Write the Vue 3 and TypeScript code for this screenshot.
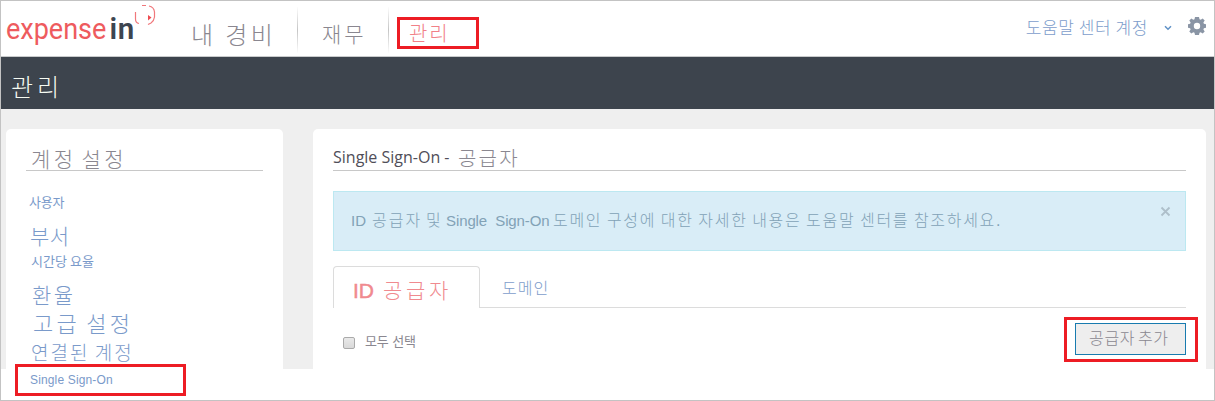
<script setup lang="ts">
interface SideLink {
  label: string
  kind: string
}

const sideLinks: SideLink[] = [
  { label: '사용자', kind: 'users' },
  { label: '부서', kind: 'departments' },
  { label: '시간당 요율', kind: 'rates' },
  { label: '환율', kind: 'exchange' },
  { label: '고급 설정', kind: 'advanced' },
  { label: '연결된 계정', kind: 'connected' },
  { label: 'Single Sign-On', kind: 'sso' },
]
</script>

<template>
  <div class="page">
    <header class="topbar">
      <svg class="logo" width="152" height="46" viewBox="0 0 152 46" aria-label="expensein">
        <text x="0" y="38" class="logo-a" transform="scale(.915 1)">expense</text>
        <text x="103.500" y="38" class="logo-b">in</text>
        <g fill="none" stroke="#f0777b" stroke-width="1.2">
          <path d="M129.500 11V18Q129.500 22 133 22.500" />
          <path d="M136 4.500H140M143 5Q148 6 148.500 11V16Q148 20 145 22L142 23.500" />
        </g>
        <path d="M142 14L145.500 16.500L142 19.500Z" fill="#ee4b50" />
      </svg>
      <nav class="nav">
        <a class="nav-mine"><span>내 경비</span></a>
        <a class="nav-finance"><span>재무</span></a>
        <a class="nav-admin"><span>관리</span></a>
      </nav>
      <div class="account">
        <span class="account-name">도움말 센터 계정</span>
        <svg class="chevron" width="8" height="6" viewBox="0 0 8 6"><path d="M1 1.200L4 4.200L7 1.200" fill="none" stroke="#5f91c6" stroke-width="1.500" /></svg>
        <svg class="gear" width="20" height="20" viewBox="0 0 20 20">
          <path fill="#8a95a5" fill-rule="evenodd" d="M8 1H12L12.500 3.300L13.700 3.800L15.700 2.500L17.700 4.500L16.400 6.500L16.900 7.700L19 8.200V11.800L16.900 12.300L16.400 13.500L17.700 15.500L15.700 17.500L13.700 16.200L12.500 16.700L12 19H8L7.500 16.700L6.300 16.200L4.300 17.500L2.300 15.500L3.600 13.500L3.100 12.300L1 11.800V8.200L3.100 7.700L3.600 6.500L2.300 4.500L4.300 2.500L6.300 3.800L7.500 3.300ZM10 6.800A3.200 3.200 0 1 0 10 13.200A3.200 3.200 0 1 0 10 6.800Z" />
        </svg>
      </div>
    </header>

    <div class="titlebar"><h1>관리</h1></div>

    <div class="content">
      <aside class="sidebar">
        <h2><span>계정 설정</span></h2>
        <ul>
          <li v-for="link in sideLinks" :key="link.kind" :class="link.kind">
            <a>{{ link.label }}</a>
          </li>
        </ul>
      </aside>

      <main class="panel">
        <h2 class="panel-title"><span class="latin">Single Sign-On -</span><span class="hangul">공급자</span></h2>
        <div class="alert">
          <p><span class="a1">ID</span><span class="a2">공급자 및</span><span class="a3">Single&nbsp; Sign-On</span><span class="a4">도메인 구성에 대한 자세한 내용은 도움말 센터를 참조하세요.</span></p>
          <svg class="close" width="11" height="11" viewBox="0 0 11 11"><path d="M1.500 1.500L9.500 9.500M9.500 1.500L1.500 9.500" stroke="#aebfca" stroke-width="1.800" /></svg>
        </div>
        <div class="tabs">
          <div class="tab active"><b>ID</b><span>공급자</span></div>
          <div class="tab second"><span>도메인</span></div>
        </div>
        <div class="toolbar">
          <label><i class="box"></i><span>모두 선택</span></label>
          <div class="callout"><button type="button"><span>공급자 추가</span></button></div>
        </div>
      </main>
    </div>
  </div>
</template>

<style>
body {
  margin: 0;
  overflow: hidden;
}
</style>

<style scoped>
* {
  box-sizing: border-box;
}
.page {
  width: 1215px;
  height: 401px;
  border: 1px solid #c3c3c3;
  background: #fff;
  overflow: hidden;
  font-family: "Liberation Sans", "Noto Sans CJK KR", sans-serif;
  font-weight: 300;
  color: #8a8790;
}
span, a, h1, h2, p {
  white-space: pre;
}
.topbar {
  height: 56px;
  display: flex;
  border-bottom: 1px solid #c9cbcc;
}
.logo {
  flex: none;
  margin-left: 5px;
}
.logo text {
  font-family: Roboto, sans-serif;
  font-size: 29.500px;
}
.logo .logo-a {
  font-weight: 400;
  fill: #ee5b5e;
}
.logo .logo-b {
  font-weight: 600;
  letter-spacing: .5px;
  fill: #3d4550;
}
.nav {
  display: flex;
  line-height: 30px;
}
.nav a {
  display: block;
}
.nav-mine {
  width: 139px;
  padding: 20px 0 0 33px;
  font-size: 24px;
  letter-spacing: 3.300px;
  word-spacing: -1px;
}
.nav-finance {
  width: 92px;
  height: 46px;
  margin-top: 6px;
  padding: 13px 0 0 24px;
  font-size: 21px;
  letter-spacing: 3px;
  border-left: 1px solid #ccc;
  border-right: 1px solid #ccc;
  border-image: linear-gradient(#fff, #c5c5c5 50%, #fff) 1;
}
.nav-admin {
  width: 82px;
  height: 32px;
  margin: 16px 0 0 8px;
  border: 3px solid #ed1c24;
  padding-left: 9px;
  line-height: 29px;
  font-size: 20px;
  letter-spacing: 1.800px;
  color: #f18188;
}
.account {
  display: flex;
  margin-left: auto;
  color: #7d9dcb;
}
.account-name {
  margin-top: 13px;
  line-height: 30px;
  font-size: 17px;
  letter-spacing: .6px;
  word-spacing: -1px;
}
.chevron {
  margin: 24px 0 0 14px;
}
.account-name + .chevron {
  margin-left: 16px;
}
.gear {
  margin: 15px 7px 0 15px;
}
.titlebar {
  height: 52px;
  background: #3d444d;
}
.titlebar h1 {
  margin: 0;
  padding: 15px 0 0 10px;
  line-height: 32px;
  font-size: 24px;
  font-weight: 300;
  letter-spacing: 4px;
  color: #f6fbf2;
}
.content {
  height: 260px;
  display: flex;
  gap: 30px;
  padding: 20px 8px 0 5px;
  background: #efefef;
}
.sidebar {
  width: 277px;
  height: 271px;
  padding: 0 20px;
  background: #fff;
  border-radius: 5px 5px 0 0;
}
.sidebar h2 {
  height: 42px;
  margin: 0;
  padding: 16px 0 0 5px;
  border-bottom: 1px solid #c8c8c8;
  line-height: 30px;
  font-size: 21px;
  font-weight: 300;
  letter-spacing: 3.500px;
  word-spacing: -4.500px;
}
.sidebar ul {
  list-style: none;
  margin: 17px 0 0;
  padding: 0;
  color: #7a9aca;
}
.sidebar li {
  height: 30px;
  line-height: 30px;
  padding-left: 4px;
}
.sidebar .users { font-size: 13px; padding-left: 3px; height: 34px; letter-spacing: -.2px; font-weight: 400; }
.sidebar .departments { font-size: 21px; letter-spacing: .5px; height: 25px; }
.sidebar .rates { font-size: 13px; padding-left: 5px; letter-spacing: 0; word-spacing: -.5px; font-weight: 400; height: 34px; }
.sidebar .exchange { font-size: 21px; padding-left: 6px; letter-spacing: 2.500px; height: 29px; }
.sidebar .advanced { font-size: 22px; padding-left: 7px; letter-spacing: 3.200px; word-spacing: -3px; height: 29px; }
.sidebar .connected { font-size: 19px; padding-left: 5px; letter-spacing: 2px; word-spacing: -2px; height: 25px; }
.sidebar .sso {
  width: 171px;
  height: 32px;
  margin-left: -11px;
  padding-left: 12px;
  border: 3px solid #ed1c24;
  line-height: 27px;
  font-size: 12px;
  letter-spacing: .15px;
  font-weight: 400;
}
.panel {
  flex: none;
  width: 893px;
  padding: 0 20px;
  background: #fff;
  border-radius: 5px 5px 0 0;
}
.panel-title {
  display: flex;
  height: 42px;
  margin: 0;
  border-bottom: 1px solid #c8c8c8;
  font-weight: 300;
}
.panel-title .latin {
  width: 125px;
  padding-top: 16px;
  font: 400 16px/24px "Open Sans", sans-serif;
  letter-spacing: 0;
  color: #504e58;
}
.panel-title .hangul {
  padding-top: 15px;
  line-height: 30px;
  font-size: 20px;
  letter-spacing: 2.200px;
}
.alert {
  display: flex;
  justify-content: space-between;
  height: 60px;
  margin-top: 20px;
  padding: 0 14px 0 17px;
  border: 1px solid #bce8f1;
  background: #d9edf7;
  color: #82a2b6;
}
.alert p {
  display: flex;
  margin: 14px 0 0;
  line-height: 30px;
  font-size: 16px;
}
.a1 { width: 21px; font-size: 15px; }
.a2 { width: 74px; letter-spacing: 2px; word-spacing: -2.500px; }
.a3 { width: 107px; font-size: 15px; letter-spacing: -.1px; }
.a4 { letter-spacing: 1.700px; word-spacing: -1.500px; }
.close {
  margin-top: 14px;
}
.tabs {
  display: flex;
  height: 42px;
  margin-top: 15px;
  border-bottom: 1px solid #dcdcdc;
}
.tab.active {
  width: 147px;
  height: 42px;
  display: flex;
  border: 1px solid #dcdcdc;
  border-bottom: 0;
  border-radius: 4px 4px 0 0;
  background: #fff;
  padding: 9px 0 0 19px;
  line-height: 30px;
  color: #f08a8f;
}
.tab.active b {
  width: 30px;
  font-size: 21px;
  font-weight: 400;
  -webkit-text-stroke: .5px #f08a8f;
}
.tab.active span {
  font-size: 21px;
  letter-spacing: 3.700px;
}
.tab.second {
  padding: 8px 0 0 22px;
  line-height: 30px;
  font-size: 16px;
  letter-spacing: 1px;
  color: #7d9dcb;
}
.toolbar {
  display: flex;
  justify-content: space-between;
}
.toolbar label {
  display: flex;
  margin: 18px 0 0 10px;
  line-height: 32px;
  font-size: 13px;
  font-weight: 400;
  letter-spacing: -.1px;
}
.box {
  width: 12px;
  height: 12px;
  margin: 11px 10px 0 0;
  border: 1px solid #aaa;
  border-radius: 2px;
  background: linear-gradient(#e9e9e9, #d9d9d9);
}
.callout {
  width: 134px;
  height: 45px;
  margin: 9px -12px 0 0;
  border: 3px solid #ed1c24;
  padding: 3px 9px 4px 8px;
}
.callout button {
  width: 111px;
  height: 32px;
  display: block;
  padding: 0 0 0 13px;
  border: 1px solid #187baf;
  background: #eee;
  text-align: left;
  font: inherit;
  font-size: 16px;
  line-height: 30px;
  letter-spacing: .7px;
  word-spacing: -2.500px;
  color: #8a8790;
}
</style>
